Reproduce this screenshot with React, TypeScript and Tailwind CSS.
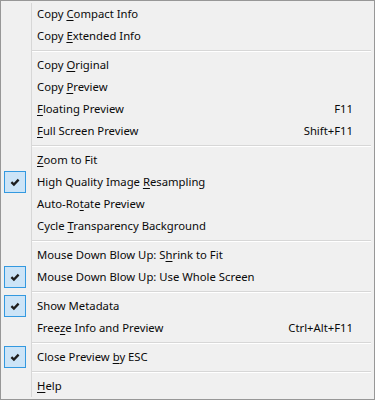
import React from "react";

type Item =
  | { type: "sep" }
  | { type: "item"; pre: string; key?: string; post?: string; shortcut?: string; checked?: boolean };

const items: Item[] = [
  { type: "item", pre: "Copy ", key: "C", post: "ompact Info" },
  { type: "item", pre: "Copy ", key: "E", post: "xtended Info" },
  { type: "sep" },
  { type: "item", pre: "Copy ", key: "O", post: "riginal" },
  { type: "item", pre: "Copy ", key: "P", post: "review" },
  { type: "item", pre: "", key: "F", post: "loating Preview", shortcut: "F11" },
  { type: "item", pre: "", key: "F", post: "ull Screen Preview", shortcut: "Shift+F11" },
  { type: "sep" },
  { type: "item", pre: "", key: "Z", post: "oom to Fit" },
  { type: "item", pre: "High Quality Image ", key: "R", post: "esampling", checked: true },
  { type: "item", pre: "Auto-Ro", key: "t", post: "ate Preview" },
  { type: "item", pre: "Cycle ", key: "T", post: "ransparency Background" },
  { type: "sep" },
  { type: "item", pre: "Mouse Down Blow Up: S", key: "h", post: "rink to Fit" },
  { type: "item", pre: "Mouse Down Blow Up: Use Whole Screen", checked: true },
  { type: "sep" },
  { type: "item", pre: "Show Metadata", checked: true },
  { type: "item", pre: "Free", key: "z", post: "e Info and Preview", shortcut: "Ctrl+Alt+F11" },
  { type: "sep" },
  { type: "item", pre: "Close Preview ", key: "b", post: "y ESC", checked: true },
  { type: "sep" },
  { type: "item", pre: "", key: "H", post: "elp" },
];

function Check() {
  return (
    <div className="ml-[1px] flex h-[22px] w-[22px] items-center justify-center border border-[#3399e0] bg-[#cce4f7]">
      <svg width="12" height="12" viewBox="0 0 12 12">
        <path d="M2.4 6.2 L4.9 8.6 L9.6 3.6" fill="none" stroke="#1e1e1e" strokeWidth="2.3" strokeLinecap="butt" strokeLinejoin="miter" />
      </svg>
    </div>
  );
}

export default function App() {
  return (
    <div
      className="flex h-[400px] w-[375px] flex-col border border-[#979797] bg-[#f0f0f0] p-[2px] text-[11.3px] text-[#0a0a0a]"
      style={{ fontFamily: '"Segoe UI", "Noto Sans", sans-serif' }}
    >
      {items.map((it, i) =>
        it.type === "sep" ? (
          <div key={i} className="flex h-[7px]">
            <div className="w-[29px] shrink-0 border-r border-[#d7d7d7]" />
            <div className="mr-[1px] flex flex-1 flex-col pt-[3px]">
              <div className="h-px bg-[#d7d7d7]" />
              <div className="h-px bg-white" />
            </div>
          </div>
        ) : (
          <div key={i} className="flex h-[22px]">
            <div className="flex w-[29px] shrink-0 items-center border-r border-[#d7d7d7]">
              {it.checked ? <Check /> : null}
            </div>
            <div className="flex flex-1 items-center justify-between whitespace-nowrap pl-[5px] pr-[19px] leading-[22px]">
              <span>
                {it.pre}
                {it.key ? <span className="underline decoration-1 underline-offset-[2px]">{it.key}</span> : null}
                {it.post}
              </span>
              {it.shortcut ? <span>{it.shortcut}</span> : null}
            </div>
          </div>
        )
      )}
    </div>
  );
}
